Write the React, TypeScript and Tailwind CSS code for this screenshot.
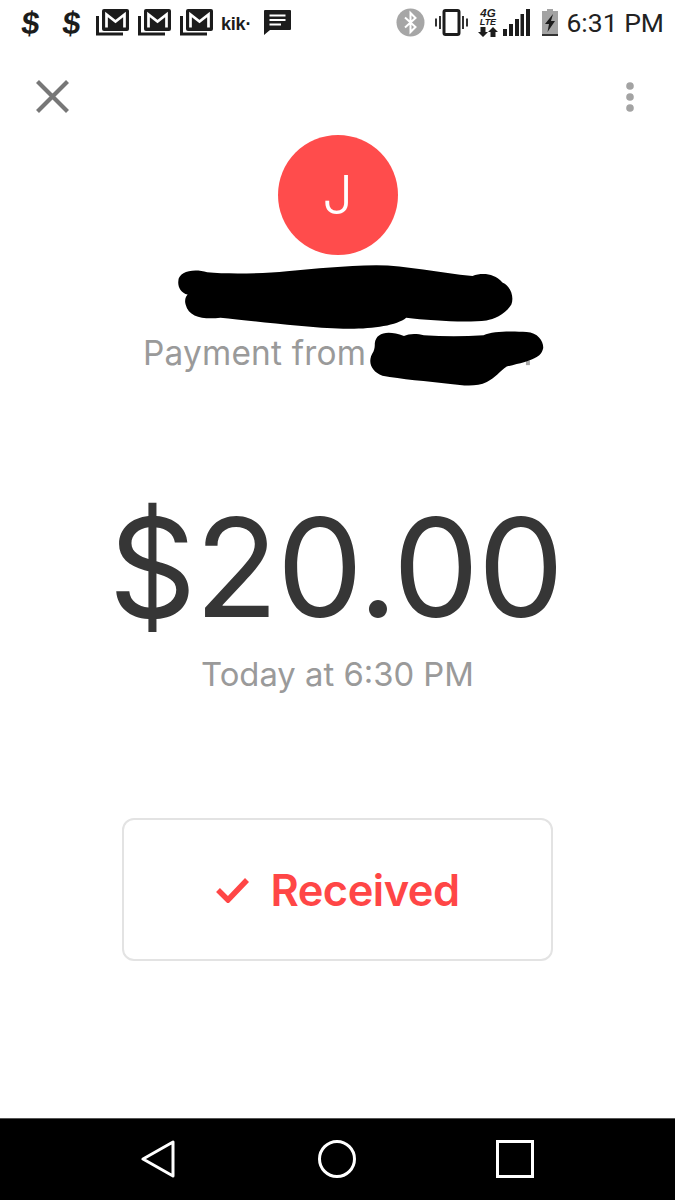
const Gmail = () => (
  <svg width="33" height="27" viewBox="0 0 33 27" fill="none">
    <path d="M1.5 7V25H27" stroke="#1c1c1c" strokeWidth="3" />
    <rect x="6" y="0" width="27" height="22" rx="2" fill="#1c1c1c" />
    <path d="M10.5 18.5V5.5L19.5 12.5L28.5 5.5V18.5" stroke="#fff" strokeWidth="2.7" fill="none" />
  </svg>
);

const Dollar = () => (
  <span className="w-[19px] text-center text-[32px] leading-[32px] font-bold -skew-x-6 text-[#1c1c1c] [font-family:'Liberation_Sans',sans-serif]">$</span>
);

const Scribble1 = () => (
  <svg width="347" height="68" viewBox="130 400 1040 205" className="block">
    <path
      d="M143 455C143 425 190 415 230 428C290 434 400 432 470 425C560 417 640 409 740 407C830 407 930 431 1030 439C1060 429 1095 431 1120 459C1148 472 1155 505 1147 525C1130 553 1095 570 1072 573C1010 581 900 573 830 565C800 590 720 600 640 598C520 595 360 573 270 565C220 570 175 565 165 525C160 510 168 498 171 495C150 490 141 470 143 455Z"
      fill="#000"
    />
  </svg>
);

const Scribble2 = () => (
  <svg width="180" height="58" viewBox="710 600 540 175" className="block">
    <rect x="1188" y="692" width="12" height="14" fill="#a8a8a8" />
    <path
      d="M732 640C736 608 770 600 820 618C835 610 860 610 880 616C940 620 1000 620 1060 616C1090 602 1150 604 1190 606C1225 608 1242 635 1240 655C1234 682 1210 692 1130 710C1110 724 1095 744 1070 757C1040 772 1000 768 960 763C890 755 810 748 755 738C720 725 708 695 728 665C732 655 732 648 732 640Z"
      fill="#000"
    />
  </svg>
);

export default function App() {
  const sans = "[font-family:Inter,'Noto_Sans',sans-serif]";
  return (
    <div className={`w-[675px] h-[1200px] bg-white flex flex-col overflow-hidden ${sans}`}>
      {/* Status bar */}
      <div className="h-[45px] flex items-center justify-between pl-[21px] pr-[11px] shrink-0">
        <div className="flex items-center">
          <Dollar />
          <span className="w-[22px]" />
          <Dollar />
          <span className="w-[15px]" />
          <div className="flex gap-[9px]">
            <Gmail />
            <Gmail />
            <Gmail />
          </div>
          <span className="ml-[8px] mt-[2px] w-[34px] text-[18px] leading-[20px] font-bold tracking-[-0.2px] text-[#1c1c1c] [font-family:'Liberation_Sans',sans-serif]">kik·</span>
          <svg width="27" height="25" viewBox="0 0 27 25" className="ml-[9px]">
            <path d="M0 1A1 1 0 0 1 1 0H26A1 1 0 0 1 27 1V19A1 1 0 0 1 26 20H6L0 25Z" fill="#1c1c1c" />
            <path d="M5.5 5.5H21.5M5.5 10H21.5M5.5 14.5H17" stroke="#fff" strokeWidth="2" />
          </svg>
        </div>
        <div className="flex items-center">
          <svg width="29" height="29" viewBox="0 0 29 29">
            <circle cx="14.5" cy="14.5" r="14" fill="#a6a6a6" />
            <path d="M9 9.5L19.5 19L14.5 24V5L19.5 10L9 19.5" stroke="#fff" strokeWidth="2" fill="none" />
          </svg>
          <svg width="33" height="27" viewBox="0 0 33 27" className="ml-[10px]">
            <rect x="9" y="1.5" width="15" height="24" rx="1.5" fill="none" stroke="#1c1c1c" strokeWidth="3" />
            <path d="M1 9.5V17.5M5 7V20M28 7V20M32 9.5V17.5" stroke="#1c1c1c" strokeWidth="1.8" />
          </svg>
          <div className="ml-[9px] w-[21px] h-[29px] flex flex-col items-center text-[#1c1c1c] [font-family:'Liberation_Sans',sans-serif]">
            <span className="text-[11.5px] leading-[10px] font-bold italic">4G</span>
            <span className="text-[9px] leading-[9px] font-bold italic">LTE</span>
            <svg width="20" height="10" viewBox="0 0 20 10">
              <path d="M5 10L0 5H2.5V0H7.5V5H10ZM15 0L20 5H17.5V10H12.5V5H10Z" fill="#1c1c1c" />
            </svg>
          </div>
          <svg width="27" height="27" viewBox="0 0 27 27" className="ml-[5px]">
            <path d="M0 20H4V27H0ZM6 15H10V27H6ZM12 10H16V27H12ZM17.5 5H21V27H17.5ZM23 0H27V27H23Z" fill="#1c1c1c" />
          </svg>
          <svg width="16" height="27" viewBox="0 0 16 27" className="ml-[12px]">
            <path d="M5 0H11V2H16V27H0V2H5Z" fill="#a3a3a3" />
            <rect x="0" y="25" width="16" height="2" fill="#333" />
            <path d="M11 5L3 15H7L5.5 23L13 12H9Z" fill="#1c1c1c" />
          </svg>
          <span className="ml-[8px] text-[26.5px] leading-[32px] text-[#222] [font-family:Roboto,sans-serif]">6:31 PM</span>
        </div>
      </div>

      {/* Toolbar */}
      <div className="h-[90px] shrink-0 flex items-center justify-between pl-[36px] pr-[40px]">
        <svg width="33" height="33" viewBox="0 0 33 33" className="mt-[13px]">
          <path d="M1.5 1.5L31.5 31.5M31.5 1.5L1.5 31.5" stroke="#777" strokeWidth="4.2" />
        </svg>
        <svg width="10" height="30" viewBox="0 0 10 30" className="mt-[13px]">
          <circle cx="5" cy="4" r="3.8" fill="#a3a3a3" />
          <circle cx="5" cy="15" r="3.8" fill="#a3a3a3" />
          <circle cx="5" cy="26" r="3.8" fill="#a3a3a3" />
        </svg>
      </div>

      {/* Main */}
      <div className="flex flex-col items-center flex-1">
        <div className="w-[120px] h-[120px] rounded-full bg-[#ff4c4c] flex items-center justify-center text-white text-[54px] font-light leading-none">
          J
        </div>
        <div className="mt-[8px] h-[68px] w-full pl-[173px]">
          <Scribble1 />
        </div>
        <div className="relative w-full h-[36px] mt-[4px]">
          <p className="pl-[143px] text-[33.4px] leading-[36px] tracking-[0.2px] text-[#9a9a9a] whitespace-nowrap">Payment from</p>
          <div className="absolute left-[367px] -top-[5px]">
            <Scribble2 />
          </div>
        </div>

        <p className="mt-[116px] pr-[4px] text-[137px] font-[415] leading-[160px] tracking-[-1.5px] text-[#363636]">$20.00</p>
        <p className="mt-[7px] text-[32.8px] leading-[40px] text-[#9a9a9a]">Today at 6:30 PM</p>

        <div className="mt-[124px] w-[431px] h-[143px] rounded-[12px] border-2 border-[#e3e3e3] flex items-center justify-center gap-[21px] pl-[1px]">
          <svg width="33" height="26" viewBox="0 0 33 26" fill="none">
            <path d="M2 13L12 23L31 3" stroke="#ff4646" strokeWidth="5.5" />
          </svg>
          <span className="text-[43.4px] leading-[50px] font-semibold text-[#ff4646] tracking-[-0.5px]">Received</span>
        </div>
      </div>

      {/* Nav bar */}
      <div className="h-[82px] shrink-0 bg-black border-t border-t-[#555] flex items-center justify-center pb-[1px]">
        <svg width="34" height="38" viewBox="0 0 34 38" fill="none">
          <path d="M32 2V36L2 19Z" stroke="#fff" strokeWidth="3" strokeLinejoin="round" />
        </svg>
        <svg width="38" height="38" viewBox="0 0 38 38" fill="none" className="ml-[143px]">
          <circle cx="19" cy="19" r="17.5" stroke="#fff" strokeWidth="3" />
        </svg>
        <svg width="38" height="38" viewBox="0 0 38 38" fill="none" className="ml-[140px]">
          <rect x="1.5" y="1.5" width="35" height="35" stroke="#fff" strokeWidth="3" />
        </svg>
      </div>
    </div>
  );
}
